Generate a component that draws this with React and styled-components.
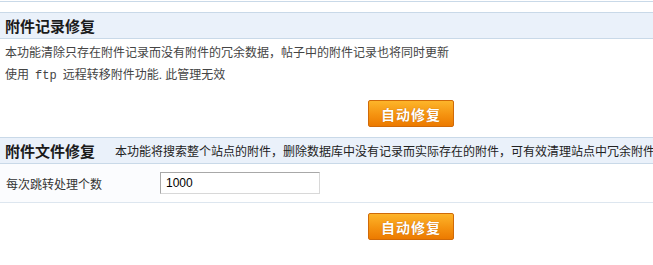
import React from "react";
import styled, { createGlobalStyle } from "styled-components";

const GlobalStyle = createGlobalStyle`
  html, body {
    margin: 0;
    padding: 0;
    background: #ffffff;
  }
  body {
    font-family: "Liberation Sans", "Noto Sans CJK SC", sans-serif;
    font-size: 12px;
    color: #333333;
  }
`;

const Page = styled.div`
  width: 653px;
  height: 265px;
  overflow: hidden;
  padding-top: 1px;
  box-sizing: border-box;
`;

const TopRule = styled.div`
  border-top: 1px solid #c9d9e8;
  margin-bottom: 10px;
`;

const SectionHeader = styled.div`
  display: flex;
  align-items: center;
  height: 25px;
  margin-top: ${(p) => p.$top || 0}px;
  border-top: 1px solid #c9d9e8;
  border-bottom: 1px solid #c9d9e8;
  background: #eaf1fa;
  padding-left: 5px;
  white-space: nowrap;
`;

const SectionTitle = styled.h3`
  margin: 0;
  font-size: 15px;
  font-weight: bold;
  color: #1a1a1a;
`;

const HeaderNote = styled.span`
  margin-left: 20px;
  font-size: 12px;
  color: #222222;
`;

const Notes = styled.div`
  padding: 3px 0 0 5px;
`;

const NoteLine = styled.p`
  margin: 0;
  line-height: 22px;
  font-size: 12px;
  color: #444444;
`;

const Code = styled.code`
  font-family: "Liberation Mono", monospace;
  font-size: 12px;
  margin: 0 6px;
`;

const ButtonRow = styled.div`
  display: flex;
  padding-left: 368px;
  margin-top: ${(p) => p.$top}px;
`;

const FixButton = styled.button`
  width: 86px;
  height: 27px;
  padding: 0;
  border: 1px solid #d06a08;
  border-radius: 2px;
  background: linear-gradient(#fdb52a, #f59310 55%, #ec7a00);
  color: #ffffff;
  font-family: "Noto Sans CJK SC", sans-serif;
  font-size: 14px;
  font-weight: bold;
  letter-spacing: 1px;
  text-shadow: 0 0 1px #b45c00;
  cursor: pointer;
`;

const FormRow = styled.div`
  display: flex;
  align-items: center;
  height: 38px;
  border-bottom: 1px solid #dde6ef;
`;

const LabelCell = styled.div`
  width: 160px;
  height: 100%;
  display: flex;
  align-items: center;
  padding-left: 6px;
  box-sizing: border-box;
  background: #fbfcfe;
  color: #333333;
`;

const TextInput = styled.input`
  width: 160px;
  height: 22px;
  box-sizing: border-box;
  border: 1px solid #a8a8a8;
  border-right-color: #d8d8d8;
  border-bottom-color: #d8d8d8;
  padding: 0 5px;
  font-family: "Liberation Sans", sans-serif;
  font-size: 12px;
  color: #000000;
`;

export default function App() {
  return (
    <>
      <GlobalStyle />
      <Page>
        <TopRule />
        <SectionHeader>
          <SectionTitle>附件记录修复</SectionTitle>
        </SectionHeader>
        <Notes>
          <NoteLine>本功能清除只存在附件记录而没有附件的冗余数据，帖子中的附件记录也将同时更新</NoteLine>
          <NoteLine>
            使用<Code>ftp</Code>远程转移附件功能. 此管理无效
          </NoteLine>
        </Notes>
        <ButtonRow $top={13}>
          <FixButton type="button">自动修复</FixButton>
        </ButtonRow>
        <SectionHeader $top={10}>
          <SectionTitle>附件文件修复</SectionTitle>
          <HeaderNote>本功能将搜索整个站点的附件，删除数据库中没有记录而实际存在的附件，可有效清理站点中冗余附件</HeaderNote>
        </SectionHeader>
        <FormRow>
          <LabelCell>每次跳转处理个数</LabelCell>
          <TextInput defaultValue="1000" />
        </FormRow>
        <ButtonRow $top={10}>
          <FixButton type="button">自动修复</FixButton>
        </ButtonRow>
      </Page>
    </>
  );
}
